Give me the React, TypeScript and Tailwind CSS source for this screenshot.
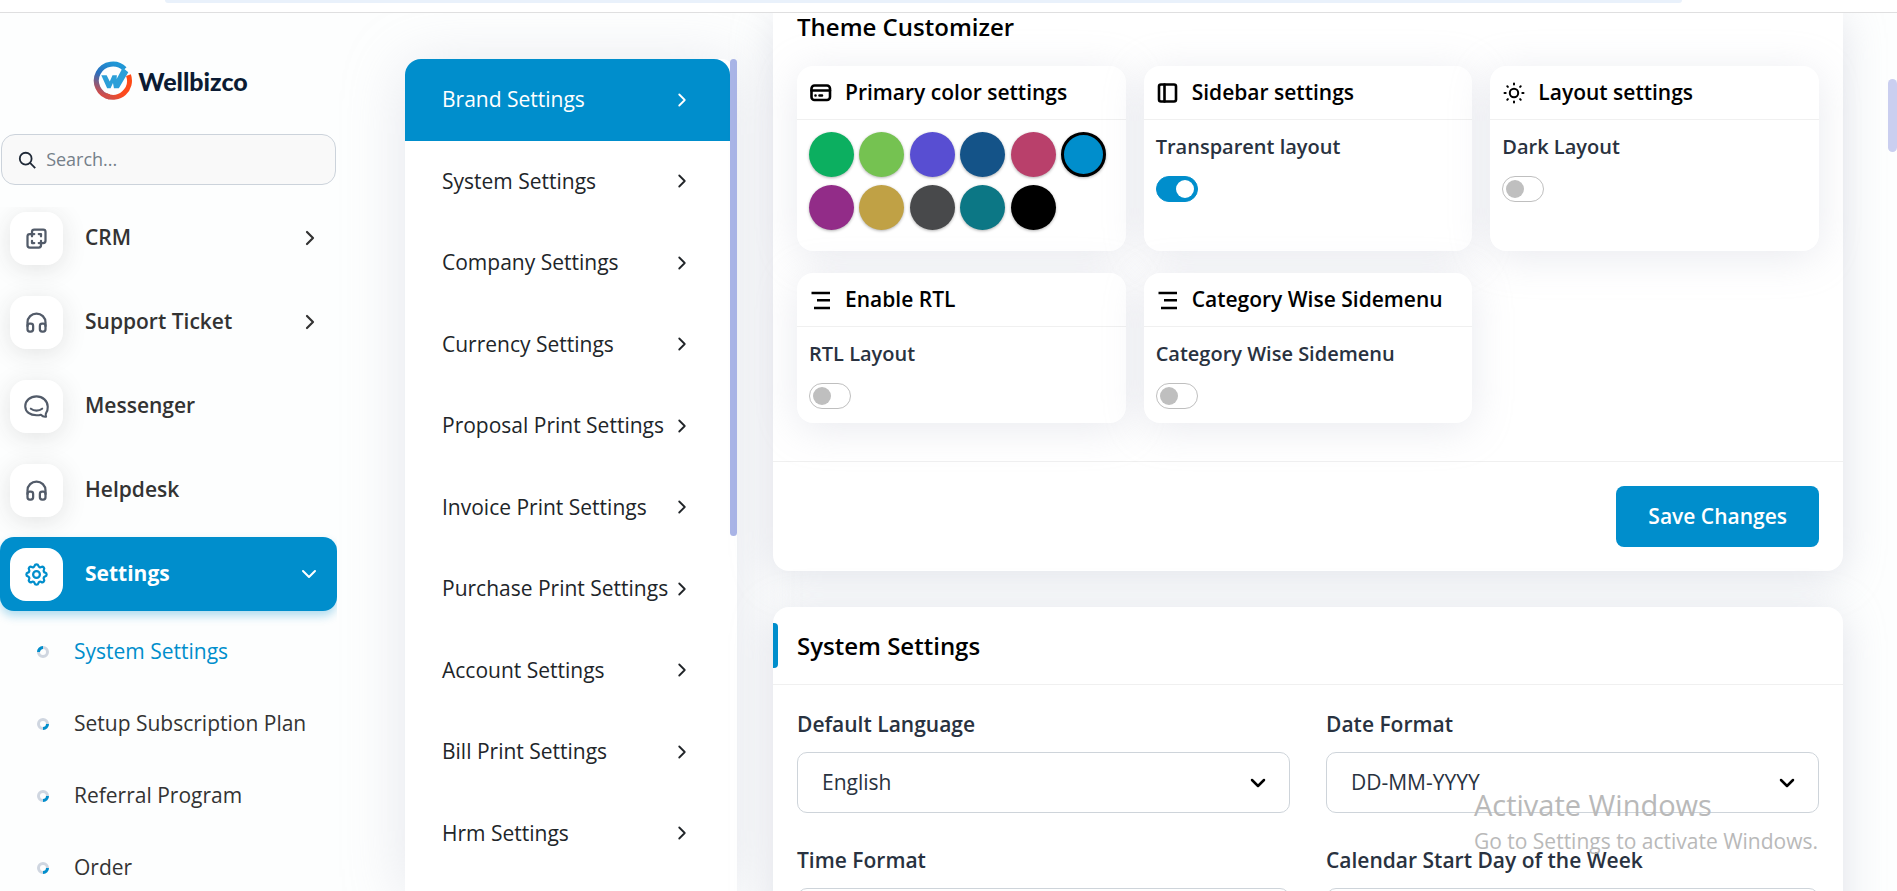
import React from 'react';
import { ChevronRight, ChevronDown } from 'lucide-react';
import { TbHeadphones, TbSettings } from 'react-icons/tb';

const svgBase = {
  fill: 'none',
  stroke: 'currentColor',
  strokeWidth: 2,
  strokeLinecap: 'round' as const,
  strokeLinejoin: 'round' as const,
  viewBox: '0 0 24 24',
  'aria-hidden': true,
};

function CrmIcon() {
  return (
    <svg {...svgBase} className="size-[27px]">
      <path d="M16 16v2a2 2 0 0 1-2 2H6a2 2 0 0 1-2-2v-8a2 2 0 0 1 2-2h2V6a2 2 0 0 1 2-2h8a2 2 0 0 1 2 2v8a2 2 0 0 1-2 2h-2" />
      <path d="M10 8H8v2M8 14v2h2M14 8h2v2M16 14v2h-2" />
    </svg>
  );
}

function ChatIcon() {
  return (
    <svg {...svgBase} className="size-[27px]" strokeWidth={1.9}>
      <path d="M20.500 21c-.6-1.200-.6-2.300.2-3.500 1-1.300 1.300-3 1.300-5.300C22 7 17.500 3 12 3S2 6.700 2 11.800s4.300 8 10 8c1.400 0 2.700-.1 3.900-.5 1.300 1.400 3 2 4.600 1.700z" />
      <path d="M7 14c2.700 2.200 7.300 2.200 10 0" />
    </svg>
  );
}

function CardIcon() {
  return (
    <svg {...svgBase} className="size-6" strokeWidth={2.6}>
      <rect x="2.500" y="4.500" width="18.500" height="14.500" rx="3" />
      <path d="M2.500 9.500h18.500M6.500 14.500h.01M10.500 14.500h2.500" />
    </svg>
  );
}

function SidebarIcon() {
  return (
    <svg {...svgBase} className="size-6" strokeWidth={2.6}>
      <rect x="3" y="3.500" width="17" height="17" rx="2" />
      <path d="M8.500 3.500v17" />
    </svg>
  );
}

function SunIcon() {
  return (
    <svg {...svgBase} className="size-6" strokeWidth={2}>
      <circle cx="12" cy="12" r="4.200" />
      <path d="M12 2.500v1M12 20.500v1M2.500 12h1.200M20.300 12h1.200M5.300 5.300l.6.6M18.100 18.100l.6.6M5.300 18.700l.6-.6M18.100 5.900l.6-.6" />
    </svg>
  );
}

function AlignIcon() {
  return (
    <svg {...svgBase} className="size-6" strokeLinecap="butt" strokeWidth={2.4}>
      <path d="M2.500 5H21M8 12.300H21M5 20H21" />
    </svg>
  );
}

function Logo() {
  return (
    <a href="#" className="flex items-center gap-1.5 text-[#0b1b33]" aria-label="Wellbizco">
      <svg viewBox="0 0 40 40" className="size-[39px]" aria-hidden>
        <defs>
          <linearGradient id="ring" x1="0.7" y1="0" x2="0.3" y2="1">
            <stop offset="0" stopColor="#1f97d6" />
            <stop offset="0.45" stopColor="#2a6fbe" />
            <stop offset="1" stopColor="#d94b45" />
          </linearGradient>
          <linearGradient id="arc" x1="1" y1="0" x2="0" y2="1">
            <stop offset="0" stopColor="#ff4a14" />
            <stop offset="0.6" stopColor="#fb4a1f" />
            <stop offset="1" stopColor="#c9504f" />
          </linearGradient>
        </defs>
        <path d="M32.500 8.200A17 17 0 1 0 17 36.800" fill="none" stroke="url(#ring)" strokeWidth="5.200" />
        <path d="M36.400 14.500A17 17 0 0 1 13 35.500" fill="none" stroke="url(#arc)" strokeWidth="5.200" />
        <path d="M8.500 14.500H14l3.200 6.500 2.800-6.500h4.500l-.3 4L30.500 7l5.700 4.500L26.500 28h-5l-1-5.500L18 28h-3.500z" fill="#2b9fd8" />
      </svg>
      <span className="font-[Lato] text-[25px] leading-8 font-black">Wellbizco</span>
    </a>
  );
}

const navItems = [
  { label: 'CRM', icon: <CrmIcon />, arrow: true },
  { label: 'Support Ticket', icon: <TbHeadphones className="size-[27px]" />, arrow: true },
  { label: 'Messenger', icon: <ChatIcon />, arrow: false },
  { label: 'Helpdesk', icon: <TbHeadphones className="size-[27px]" />, arrow: false },
];

const subItems = ['System Settings', 'Setup Subscription Plan', 'Referral Program', 'Order'];

const sections = [
  'Brand Settings',
  'System Settings',
  'Company Settings',
  'Currency Settings',
  'Proposal Print Settings',
  'Invoice Print Settings',
  'Purchase Print Settings',
  'Account Settings',
  'Bill Print Settings',
  'Hrm Settings',
];

const swatches = [
  { name: 'Green', cls: 'bg-[#0caf60]' },
  { name: 'Lime', cls: 'bg-[#75c251]' },
  { name: 'Violet', cls: 'bg-[#584ed2]' },
  { name: 'Navy', cls: 'bg-[#145388]' },
  { name: 'Rose', cls: 'bg-[#b9406b]' },
  { name: 'Blue', cls: 'bg-[#008ecc] border-3 border-black' },
  { name: 'Purple', cls: 'bg-[#922c88]' },
  { name: 'Gold', cls: 'bg-[#c0a145]' },
  { name: 'Graphite', cls: 'bg-[#48494b]' },
  { name: 'Teal', cls: 'bg-[#0c7785]' },
  { name: 'Black', cls: 'bg-black' },
];

function SubBullet({ active }: { active: boolean }) {
  return (
    <svg viewBox="0 0 12 12" className="size-3" aria-hidden>
      <circle cx="6" cy="6" r="4.500" fill="none" stroke="#cfd6e0" strokeWidth="3" />
      <path
        d={active ? 'M1.500 6A4.500 4.500 0 0 1 6 1.500' : 'M10.500 6A4.500 4.500 0 0 1 6 10.500'}
        fill="none"
        stroke="#008ecc"
        strokeWidth="3"
      />
    </svg>
  );
}

function Sidebar() {
  return (
    <aside className="flex w-[337px] shrink-0 flex-col">
      <div className="flex justify-center pt-12 pb-[34px] pl-1">
        <Logo />
      </div>
      <label className="mx-px flex h-[52px] items-center gap-2.5 rounded-[14px] border border-[#ccd3db] bg-[#f9f9f9] px-4">
        <svg viewBox="0 0 20 20" className="size-5 text-[#1f2937]" fill="none" stroke="currentColor" strokeWidth="2" aria-hidden>
          <circle cx="8.500" cy="8.500" r="6.500" />
          <path d="M13 13l6 6" />
        </svg>
        <input
          type="search"
          aria-label="Search"
          placeholder="Search..."
          className="w-full min-w-0 bg-transparent text-[18px] outline-none placeholder:text-[#757f89]"
        />
      </label>
      <nav className="mt-[22px] overflow-hidden">
        {navItems.map((item) => (
          <a
            key={item.label}
            href="#"
            className="mb-2.5 flex h-[74px] items-center gap-[22px] pr-[15px] pl-2.5 text-[21px] font-semibold text-[#333] first:-mt-1.5"
          >
            <span className="flex size-[53px] items-center justify-center rounded-2xl bg-white text-[#525b69] shadow-[0_4px_24px_rgba(50,50,50,0.13)]">
              {item.icon}
            </span>
            <span className="flex-1">{item.label}</span>
            {item.arrow && <ChevronRight className="size-6" strokeWidth={2.2} />}
          </a>
        ))}
        <a
          href="#"
          className="flex h-[74px] items-center gap-[22px] rounded-[14px] bg-[#008ecc] pr-4 pl-2.5 text-[21px] font-bold text-white shadow-[0_5px_10px_rgba(0,142,204,0.3)]"
        >
          <span className="flex size-[53px] items-center justify-center rounded-2xl bg-white text-[#008ecc]">
            <TbSettings className="size-[27px]" />
          </span>
          <span className="flex-1">Settings</span>
          <ChevronDown className="size-6" />
        </a>
        <ul className="mt-[5px]">
          {subItems.map((s, i) => (
            <li key={s}>
              <a
                href="#"
                className={
                  i === 0
                    ? 'flex h-[72px] items-center gap-[25px] pl-[37px] text-[21px] text-[#008ecc]'
                    : 'flex h-[72px] items-center gap-[25px] pl-[37px] text-[21px] text-[#333]'
                }
              >
                <SubBullet active={i === 0} />
                {s}
              </a>
            </li>
          ))}
        </ul>
      </nav>
    </aside>
  );
}

function SectionMenu() {
  return (
    <nav className="mt-[46px] ml-[68px] flex w-[332px] shrink-0 items-start rounded-t-2xl bg-white shadow-[0_6px_60px_rgba(182,186,203,0.35)]">
      <div className="grid min-h-[815px] min-w-0 flex-1 auto-rows-fr">
        {sections.map((s, i) => (
          <a
            key={s}
            href="#"
            className={
              i === 0
                ? 'flex items-center justify-between rounded-t-2xl bg-[#008ecc] pr-[37px] pl-[37px] text-[21px] whitespace-nowrap text-white'
                : 'flex items-center justify-between pr-[37px] pl-[37px] text-[21px] whitespace-nowrap text-[#212529]'
            }
          >
            {s}
            <ChevronRight className="size-[22px] shrink-0" />
          </a>
        ))}
      </div>
      <div className="h-[477px] w-[7px] rounded-full bg-[#a9b4e6]" />
    </nav>
  );
}

function OptionCard({ icon, title, children }: { icon: React.ReactNode; title: string; children: React.ReactNode }) {
  return (
    <section className="rounded-2xl bg-white shadow-[0_6px_40px_rgba(182,186,203,0.3)]">
      <h3 className="flex h-[54px] items-center gap-3 border-b border-[#f0f0f0] px-3 text-[21px] font-semibold text-black">
        {icon}
        {title}
      </h3>
      <div className="px-3 pt-3 pb-3.5">{children}</div>
    </section>
  );
}

function Toggle({ id, label, on = false }: { id: string; label: string; on?: boolean }) {
  return (
    <div>
      <label htmlFor={id} className="block text-[20px] leading-[30px] font-semibold text-[#293240]">
        {label}
      </label>
      <input
        id={id}
        type="checkbox"
        role="switch"
        defaultChecked={on}
        className="mt-3.5 block h-[26px] w-[42px] appearance-none rounded-full border border-[#bfbfbf] bg-white before:mt-[3px] before:ml-[3px] before:block before:size-[18px] before:rounded-full before:bg-[#bfbfbf] checked:border-[#008ecc] checked:bg-[#008ecc] checked:before:ml-[19px] checked:before:bg-white"
      />
    </div>
  );
}

function SelectField({ id, label, value }: { id: string; label: string; value: string }) {
  return (
    <div>
      <label htmlFor={id} className="mb-3 block text-[21px] leading-8 font-semibold text-[#293240]">
        {label}
      </label>
      <div className="grid items-center">
        <select
          id={id}
          className="col-start-1 row-start-1 h-[61px] w-full appearance-none rounded-[10px] border border-[#ced4da] bg-white px-6 text-[21px] text-[#293240]"
        >
          <option>{value}</option>
        </select>
        <ChevronDown
          className="pointer-events-none col-start-1 row-start-1 mr-5 size-6 justify-self-end text-black"
          strokeWidth={2.5}
        />
      </div>
    </div>
  );
}

export default function App() {
  return (
    <div className="relative flex h-screen flex-col overflow-hidden bg-[#fdfefe] font-['Open_Sans','Noto_Sans',sans-serif]">
      <div className="h-[13px] shrink-0 border-b border-[#dfdfe0] bg-white pr-[215px] pl-[165px]">
        <div className="h-[3px] rounded-b-xl bg-[#e9f1fb]" />
      </div>
      <div className="flex min-h-0 flex-1 overflow-hidden">
        <Sidebar />
        <SectionMenu />
        <main className="mr-[54px] ml-9 flex min-w-0 flex-1 flex-col gap-9">
          <section className="rounded-b-2xl bg-white shadow-[0_6px_40px_rgba(182,186,203,0.4)]">
            <div className="px-6 pb-[38px]">
              <h2 className="h-[53px] text-[24px] leading-7 font-semibold text-black">Theme Customizer</h2>
              <div className="grid grid-cols-3 gap-x-[18px] gap-y-[22px]">
                <OptionCard icon={<CardIcon />} title="Primary color settings">
                  <div className="grid w-[297px] max-w-full grid-cols-[repeat(6,45px)] justify-between gap-y-2 pb-[7px]">
                    {swatches.map((s) => (
                      <button
                        key={s.name}
                        type="button"
                        aria-label={s.name}
                        className={`size-[45px] rounded-full shadow-[0_1px_3px_rgba(0,0,0,0.3)] ${s.cls}`}
                      />
                    ))}
                  </div>
                </OptionCard>
                <OptionCard icon={<SidebarIcon />} title="Sidebar settings">
                  <Toggle id="transparent" label="Transparent layout" on />
                </OptionCard>
                <OptionCard icon={<SunIcon />} title="Layout settings">
                  <Toggle id="dark" label="Dark Layout" />
                </OptionCard>
                <OptionCard icon={<AlignIcon />} title="Enable RTL">
                  <Toggle id="rtl" label="RTL Layout" />
                </OptionCard>
                <OptionCard icon={<AlignIcon />} title="Category Wise Sidemenu">
                  <Toggle id="category" label="Category Wise Sidemenu" />
                </OptionCard>
              </div>
            </div>
            <div className="flex justify-end border-t border-[#f0f0f0] px-6 pt-6 pb-6">
              <button
                type="button"
                className="h-[61px] rounded-lg bg-[#008ecc] px-8 text-[21px] font-semibold text-white"
              >
                Save Changes
              </button>
            </div>
          </section>
          <section className="rounded-t-2xl bg-white shadow-[0_6px_40px_rgba(182,186,203,0.4)]">
            <header className="flex h-[78px] items-center gap-[19px] border-b border-[#f0f0f0]">
              <span className="h-[45px] w-[5px] rounded-r bg-[#008ecc]" />
              <h2 className="text-[24px] font-semibold text-black">System Settings</h2>
            </header>
            <div className="grid grid-cols-2 gap-x-9 gap-y-[31px] px-6 pt-[23px]">
              <SelectField id="language" label="Default Language" value="English" />
              <SelectField id="date" label="Date Format" value="DD-MM-YYYY" />
              <SelectField id="time" label="Time Format" value="13:45" />
              <SelectField id="week" label="Calendar Start Day of the Week" value="Sunday" />
            </div>
          </section>
        </main>
      </div>
      <div className="absolute top-[79px] right-0 h-[73px] w-[9px] rounded-full bg-[#cacff0]" />
      <div className="pointer-events-none absolute right-[79px] bottom-[34px] text-[#b9b9b9]">
        <p className="mb-0.5 text-[29px] leading-9">Activate Windows</p>
        <p className="text-[21px] leading-8">Go to Settings to activate Windows.</p>
      </div>
    </div>
  );
}
